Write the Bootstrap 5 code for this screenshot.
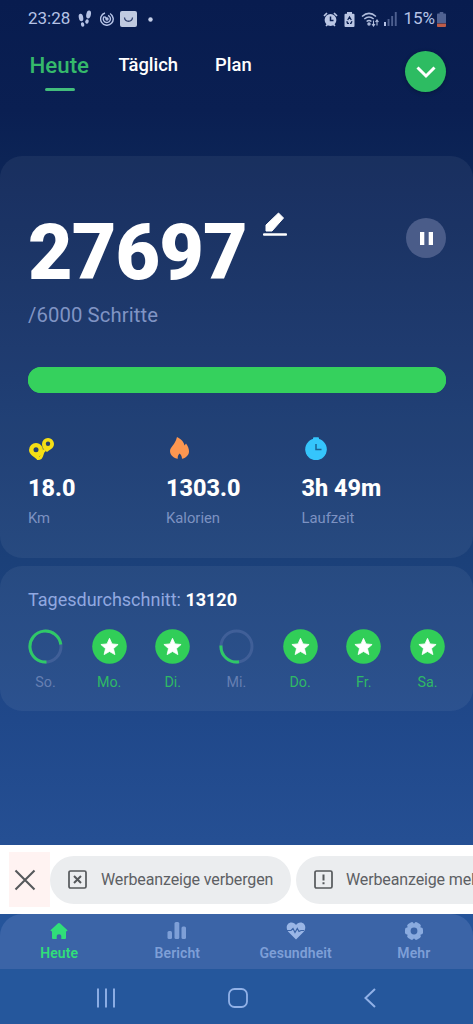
<!DOCTYPE html>
<html lang="de">
<head>
<meta charset="utf-8">
<meta name="viewport" content="width=device-width, initial-scale=1">
<title>Schrittzähler</title>
<link href="https://cdn.jsdelivr.net/npm/bootstrap@5.3.0/dist/css/bootstrap.min.css" rel="stylesheet">
<style>
  body { font-family: Roboto, "Liberation Sans", sans-serif; color: #fff; height: 1024px; overflow: hidden;
    background: linear-gradient(#081c4f 0, #0a1f52 110px, #0c2456 160px, #13326a 380px, #1b4079 560px, #20488a 720px, #254f93 840px, #25579c 970px, #25579c 1024px); }
  svg { display: block; flex: none; }
  .statusbar { height: 38px; padding: 0 27px 0 28px; font-size: 17px; color: #b6c3e6; }
  .tabs { height: 118px; padding: 9px 27px 0 29.5px; }
  .tab-link { font-size: 18.4px; font-weight: 500; line-height: 36px; color: #fff; text-decoration: none; }
  .tab-link.active { font-size: 22.3px; color: #35b96b; width: 60px; }
  .tab-link.active::after { content: ""; display: block; width: 30px; height: 3px; border-radius: 2px; background: #43bd7c; margin: 5px auto 0; }
  .round-btn { width: 41px; height: 41px; border-radius: 50%; background: #2dbc62; box-shadow: 0 1px 4px #0004; margin-top: 4px; }
  .panel { background: rgba(255,255,255,.055); border-radius: 22px; }
  .today { height: 402px; padding: 50px 27px 0 28px; }
  .steps { font-size: 77px; font-weight: 900; line-height: 94px; letter-spacing: -.9px; }
  .pause { width: 40px; height: 40px; border-radius: 50%; background: #4a5c89; margin-top: 12px; }
  .goal { font-size: 20.3px; line-height: 26px; color: #8094c4; margin-top: 2px; letter-spacing: .1px; }
  .goalbar { height: 26px; border-radius: 13px; background: #35d15d; margin-top: 39px; }
  .goalbar .progress-bar { background: #35d15d; }
  .stats { margin-top: 44px; }
  .stat-value { font-size: 23.400px; font-weight: 800; line-height: 28px; margin-top: 12px; }
  .stat-name { font-size: 14.8px; line-height: 20px; color: #7d92c2; margin-top: 6px; }
  .week { height: 145px; margin-top: 8px; padding: 21px 28px 0 28px; }
  .avg { font-size: 18px; line-height: 26px; color: #91a8e0; }
  .days { margin-top: 16px; }
  .day { width: 35px; font-size: 14.300px; line-height: 20px; color: #667fb2; text-align: center; }
  .day svg { margin-bottom: 8px; }
  .day.done { color: #2fb965; }
  .ad { height: 69px; margin-top: 134px; background: #fff; color: #5d6064; overflow: hidden; }
  .ad-close { width: 50px; height: 55px; background: linear-gradient(90deg, #fff 9px, #fff3f2 9px); padding-left: 14px; }
  .ad-pill { height: 48px; border-radius: 24px; background: #ebedef; font-size: 16px; letter-spacing: -.13px; padding-left: 17px; }
  .nav-shell { background: #25549a; }
  .bottom-nav { height: 55px; background: #3b64a7; border-radius: 22px 22px 0 0; font-size: 14px; font-weight: 600; line-height: 18px; letter-spacing: .1px; color: #7e9fd7; }
  .bottom-nav .item { width: 118.25px; padding-top: 7px; }
  .bottom-nav .item span { margin-top: 3px; }
  .bottom-nav .active { color: #30df79; }
  .sysnav { height: 55px; color: #91b1e7; }
</style>
</head>
<body>
<svg width="0" height="0" class="position-absolute"><defs>
  <symbol id="star" viewBox="0 0 35 35"><circle cx="17.5" cy="17.5" r="17.3" fill="#31ce58"/><path fill="#fff" stroke="#fff" stroke-width=".8" stroke-linejoin="round" d="M17.5 9.3l2.5 5.6 6.1.6-4.6 4.1 1.4 6-5.4-3.1-5.4 3.1 1.4-6-4.6-4.1 6.1-.6z"/></symbol>
</defs></svg>

<header class="statusbar d-flex align-items-center justify-content-between">
  <div class="d-flex align-items-center">
    <span>23:28</span>
    <svg class="ms-2" width="14" height="18" viewBox="0 0 14 18" fill="currentColor"><ellipse cx="3" cy="7.5" rx="2.2" ry="3.8" transform="rotate(-12 3 7.5)"/><ellipse cx="4.6" cy="14.5" rx="1.7" ry="2.3" transform="rotate(-12 4.6 14.5)"/><ellipse cx="10.6" cy="4.5" rx="2.3" ry="4" transform="rotate(12 10.6 4.5)"/><ellipse cx="9" cy="11.5" rx="1.7" ry="2.2" transform="rotate(12 9 11.5)"/></svg>
    <svg class="ms-2" width="14" height="14" viewBox="0 0 14 14" fill="none" stroke="currentColor" stroke-width="1.4"><path d="M5 1A6.3 6.3 0 1 0 10 1.5M11.5 3A6 6 0 0 1 13 6"/><path d="M4.3 4.4A3.6 3.6 0 1 0 8 3.5"/><path d="M4.5 4.5L7 7"/><circle cx="7" cy="7" r="1"/></svg>
    <svg width="17" height="16" viewBox="0 0 17 16" style="margin-left:6px"><rect width="17" height="16" rx="2" fill="#c0cae0"/><path d="M4.5 6.5c.5 5 7.500 5 8 0" fill="none" stroke="#30406d" stroke-width="1.3"/></svg>
    <svg width="5" height="5" viewBox="0 0 5 5" style="margin-left:11px"><circle cx="2.5" cy="2.500" r="2.200" fill="#c5cfe8"/></svg>
  </div>
  <div class="d-flex align-items-center">
    <svg width="15" height="15" viewBox="0 0 15 15"><circle cx="7.500" cy="8" r="5.900" fill="#bac6e4"/><path d="M1 4l3-3M14 4l-3-3M3 14l2-2M12 14l-2-2" stroke="#bac6e4" stroke-width="1.700"/><path d="M7.500 4.500V8.400h3" stroke="#0a1f52" stroke-width="1.500" fill="none"/></svg>
    <svg width="11" height="15" viewBox="0 0 11 15" style="margin-left:6px"><path fill="#bac6e4" d="M3 0h5v1.700h1.500q1 0 1 1V14q0 1-1 1h-8q-1 0-1-1V2.700q0-1 1-1H3z"/><path d="M3.700 8L5.500 5l1.800 3M8 9.300l-1 2H6M5 11.300H3.500l-.7-2" stroke="#0a1f52" stroke-width="1.300" fill="none"/></svg>
    <svg width="18" height="15" viewBox="0 0 18 15" style="margin-left:6px" fill="none" stroke="#b0bddd" stroke-width="1.500"><path d="M1 4.500Q8 -1.700 15 4.500M3.300 7Q8 3 12.700 7M5.600 9.500Q8 7.500 10.400 9.500"/><circle cx="8" cy="12" r="1"/><path d="M12.500 8.500V13.500M11 12l1.500 2L14 12M16 13.500V8.500M14.500 10L16 8l1.500 2" stroke-width="1.100"/></svg>
    <svg width="13" height="14" viewBox="0 0 13 14" style="margin-left:5px"><path fill="#b6c3e6" d="M0 10h2v4H0z"/><path fill="#4e6090" d="M3.600 7h1.900v7H3.600zM7.200 4h1.900v10H7.200zM10.800 0h1.900v14h-1.900z"/></svg>
    <span style="margin-left:6px">15%</span>
    <svg width="9" height="15" viewBox="0 0 10 15" preserveAspectRatio="none" style="margin-left:2px"><path fill="#506292" d="M3 0h4v1.500h2q1 0 1 1V11H0V2.500q0-1 1-1h2z"/><path fill="#bd5c49" d="M0 11.500h10V14q0 1-1 1H1q-1 0-1-1z"/></svg>
  </div>
</header>

<nav class="tabs d-flex align-items-start">
  <a class="tab-link active">Heute</a>
  <a class="tab-link" style="margin-left:29px">Täglich</a>
  <a class="tab-link" style="margin-left:37px">Plan</a>
  <div class="round-btn ms-auto d-flex align-items-center justify-content-center">
    <svg width="20" height="14" viewBox="0 0 20 14" fill="none" stroke="#fff" stroke-width="3"><path d="M1.500 2.500L10 11l8.500-8.500"/></svg>
  </div>
</nav>

<main>
  <section class="panel today">
    <div class="d-flex align-items-start">
      <div class="steps">27697</div>
      <svg width="24" height="26" viewBox="0 0 24 26" style="margin:5px 0 0 16px"><path fill="#fff" stroke="#fff" stroke-linejoin="round" d="M3 20V14L15.500 2l5 5L9 20z"/><rect y="22.300" width="24" height="2.500" rx="1" fill="#fff"/></svg>
      <div class="pause ms-auto d-flex align-items-center justify-content-center">
        <svg width="13" height="13" viewBox="0 0 13 13" fill="#fff"><path d="M0 0h4.300v13H0zM8.700 0H13v13H8.700z"/></svg>
      </div>
    </div>
    <div class="goal">/6000 Schritte</div>
    <div class="progress goalbar"><div class="progress-bar w-100"></div></div>
    <div class="stats d-flex">
      <div style="width:138px">
        <svg width="27" height="25" viewBox="0 0 27 25"><path d="M9 21.500c7 1 3-6 8-8.500" fill="none" stroke="#f5df15" stroke-width="3"/><path fill="#f5df15" d="M8 6a7 7 0 0 1 6.600 9.200C13.500 18 11 19.500 9.500 22.500 6 20 1 17 1 12.900A7 7 0 0 1 8 6zM20 1a6 6 0 0 1 5.500 8.300c-1 2.500-4 3.500-6.500 5.700-3-1.800-5-4.500-5-7.800A6 6 0 0 1 20 1z"/><circle cx="8" cy="12.700" r="2.500" fill="#26406d"/><circle cx="20" cy="6.700" r="2.200" fill="#26406d"/></svg>
        <div class="stat-value">18.0</div><div class="stat-name">Km</div>
      </div>
      <div style="width:135.500px">
        <svg width="27" height="25" viewBox="0 0 27 25"><path fill="#fc9650" d="M11 0c5 2.500 7 5.500 7.500 8.500l1.500-2c2 2.800 3 5.500 3 8 0 4-3.500 6.500-7 7.300 0-2-.7-3.500-2.300-5.300-1.500 1.500-2.200 2.700-1.900 5.300C8 21 4 18.500 4 14c0-4 5-6 7-14z"/></svg>
        <div class="stat-value">1303.0</div><div class="stat-name">Kalorien</div>
      </div>
      <div>
        <svg width="27" height="25" viewBox="0 0 27 25"><circle cx="14" cy="12.300" r="10.800" fill="#35c5fc"/><rect x="11" y=".3" width="6" height="3" rx="1" fill="#35c5fc"/><path d="M14 7v5.500h5.500" fill="none" stroke="#196293" stroke-width="1.500"/></svg>
        <div class="stat-value">3h 49m</div><div class="stat-name">Laufzeit</div>
      </div>
    </div>
  </section>

  <section class="panel week">
    <div class="avg">Tagesdurchschnitt: <b class="text-white">13120</b></div>
    <div class="days d-flex justify-content-between">
      <div class="day"><svg width="35" height="35" viewBox="0 0 35 35" fill="none" stroke-width="3"><circle cx="17.500" cy="17.500" r="15.500" stroke="#405f98"/><path d="M18.500 33A15.500 15.500 0 1 1 32.800 15.500" stroke="#2fc967"/></svg>So.</div>
      <div class="day done"><svg width="35" height="35"><use href="#star"/></svg>Mo.</div>
      <div class="day done"><svg width="35" height="35"><use href="#star"/></svg>Di.</div>
      <div class="day"><svg width="35" height="35" viewBox="0 0 35 35" fill="none" stroke-width="3"><circle cx="17.500" cy="17.500" r="15.500" stroke="#405f98"/><path d="M20 32.800A15.500 15.500 0 0 1 2 16.500" stroke="#2fc967"/></svg>Mi.</div>
      <div class="day done"><svg width="35" height="35"><use href="#star"/></svg>Do.</div>
      <div class="day done"><svg width="35" height="35"><use href="#star"/></svg>Fr.</div>
      <div class="day done"><svg width="35" height="35"><use href="#star"/></svg>Sa.</div>
    </div>
  </section>
</main>

<aside class="ad d-flex align-items-center text-nowrap">
  <div class="ad-close d-flex align-items-center flex-shrink-0"><svg width="22" height="22" viewBox="0 0 22 22" fill="none" stroke="#55585b" stroke-width="2.100"><path d="M1.500 1.500l19 19m0-19l-19 19"/></svg></div>
  <div class="ad-pill d-flex align-items-center flex-shrink-0" style="width:241px">
    <svg width="21" height="21" viewBox="0 0 21 21" fill="none" stroke="#55585b" stroke-width="1.700"><rect x="2" y="2" width="17" height="17" rx="1.500"/><path d="M7 7l7 7m0-7l-7 7" stroke-width="2"/></svg><span style="margin-left:13px">Werbeanzeige verbergen</span>
  </div>
  <div class="ad-pill d-flex align-items-center flex-shrink-0" style="width:241px;margin-left:5px">
    <svg width="21" height="21" viewBox="0 0 21 21" fill="none" stroke="#55585b" stroke-width="1.700"><rect x="2" y="2" width="17" height="17" rx="1.500"/><path d="M10.500 5.500v6m0 1.800v2" stroke-width="2"/></svg><span style="margin-left:12px">Werbeanzeige melden</span>
  </div>
</aside>

<div class="nav-shell"><nav class="bottom-nav d-flex">
  <div class="item active d-flex flex-column align-items-center"><svg width="20" height="20" viewBox="0 0 20 20" fill="currentColor"><path d="M10 2q.7 0 1.200.5l7 6.500q.7 1-.4 1.300H17V17q0 1-1 1h-3.700v-3q0-1.700-2.300-1.700T7.700 15v3H4q-1 0-1-1v-6.700h-.8q-1.100-.3-.4-1.300l7-6.500Q9.300 2 10 2z"/></svg><span>Heute</span></div>
  <div class="item d-flex flex-column align-items-center"><svg width="20" height="20" viewBox="0 0 20 20" fill="currentColor"><rect x=".5" y="10" width="4.500" height="8" rx="1.500"/><rect x="7.500" y="1" width="4.800" height="17" rx="1.500"/><rect x="14.500" y="5.500" width="4.500" height="12.500" rx="1.500"/></svg><span>Bericht</span></div>
  <div class="item d-flex flex-column align-items-center"><svg width="20" height="20" viewBox="0 0 20 20"><path fill="#9ab6e6" d="M10 18.500L2.500 11C-1 7 1 1.500 5.500 1.500 7.500 1.500 9 2.400 10 4c1-1.600 2.500-2.500 4.500-2.500C19 1.500 21 7 17.500 11z"/><path d="M1 9.500h4L7 7.500l2 4 2.300-4 1.700 3 2-1h3" fill="none" stroke="#3b64a7" stroke-width="1.200"/></svg><span>Gesundheit</span></div>
  <div class="item d-flex flex-column align-items-center"><svg width="20" height="20" viewBox="0 0 20 20"><g fill="#8aabdf"><circle cx="10" cy="10" r="7.500"/><rect x="6.500" y="1" width="7" height="18" rx="2" transform="rotate(30 10 10)"/><rect x="6.500" y="1" width="7" height="18" rx="2" transform="rotate(90 10 10)"/><rect x="6.500" y="1" width="7" height="18" rx="2" transform="rotate(150 10 10)"/></g><circle cx="10" cy="10" r="3.400" fill="#3b64a7"/></svg><span>Mehr</span></div>
</nav></div>

<footer class="sysnav d-flex align-items-center" style="padding:3px 0 0 96px">
  <svg width="20" height="20" viewBox="0 0 20 20" stroke="currentColor" stroke-width="1.900"><path d="M2 .5v19M10 .5v19M18 .5v19"/></svg>
  <svg width="22" height="22" viewBox="0 0 22 22" fill="none" stroke="currentColor" stroke-width="1.800" style="margin-left:111px"><rect x="2" y="2" width="18" height="18" rx="5.500"/></svg>
  <svg width="14" height="20" viewBox="0 0 14 20" fill="none" stroke="currentColor" stroke-width="2" style="margin-left:114px"><path d="M12 1L2.500 10l9.500 9"/></svg>
</footer>
<script src="https://cdn.jsdelivr.net/npm/bootstrap@5.3.0/dist/js/bootstrap.bundle.min.js"></script>
</body>
</html>
